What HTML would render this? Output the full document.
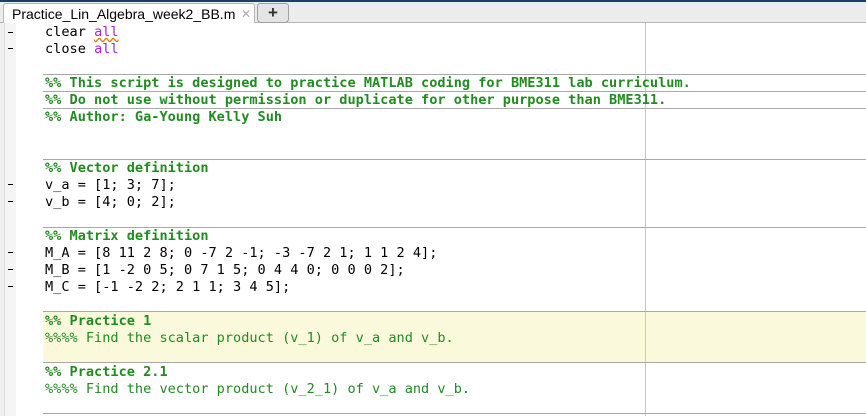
<!DOCTYPE html>
<html><head><style>
body{margin:0;width:866px;height:416px;overflow:hidden;background:#fff;font-family:"DejaVu Sans Mono",monospace;position:relative}
#top{position:absolute;left:0;top:0;width:866px;height:2px;background:#1f3d6b}
#bar{position:absolute;left:0;top:2px;width:866px;height:20px;background:#ececec;border-bottom:1px solid #b5b5b5}
#tab{position:absolute;left:3px;top:3px;width:252px;height:20px;background:#fff;border:1px solid #b5b5b5;border-bottom:none;border-radius:3px 3px 0 0;font:14px "Liberation Sans",sans-serif;color:#000;line-height:20px;padding-left:8px;box-sizing:border-box}
#tab span{position:absolute;left:237px;color:#aaa;font-size:12px}
#plus{position:absolute;left:257px;top:3px;width:30px;height:18px;background:#e4e4e4;border:1px solid #a0a0a0;border-radius:3px 3px 4px 4px;text-align:center;font:bold 17px "Liberation Sans",sans-serif;line-height:18px;color:#333}
#gut{position:absolute;left:0;top:23px;width:4px;height:393px;background:#efefef;border-right:1px solid #ddd}
#gut2{position:absolute;left:5px;top:23px;width:11px;height:393px;background:#f5f5f5}
#vl{position:absolute;left:645px;top:23px;width:1px;height:393px;background:#c8c8c8}
.l{position:absolute;left:45px;font-size:13.58px;line-height:17px;height:17px;white-space:pre;color:#000}
.c{color:#228b22}.b{font-weight:bold}.p{color:#a020f0}
.sep{position:absolute;left:43px;width:823px;height:1px;background:#a8a8a8}
.d{position:absolute;left:8px;width:5px;height:1px;background:#000}
#hl{position:absolute;left:43px;top:312px;width:823px;height:50px;background:#fbf9dc}
</style></head><body>
<div id="top"></div><div id="bar"></div>
<div id="tab">Practice_Lin_Algebra_week2_BB.m<span>✕</span></div>
<div id="plus">+</div>
<div id="gut"></div><div id="gut2"></div>
<div id="hl"></div>
<div id="vl"></div>
<div class="sep" style="top:74px"></div>
<div class="sep" style="top:91px"></div>
<div class="sep" style="top:108px"></div>
<div class="sep" style="top:159px"></div>
<div class="sep" style="top:227px"></div>
<div class="sep" style="top:311px"></div>
<div class="sep" style="top:362px"></div>
<div class="sep" style="top:413px"></div>
<div class="d" style="top:32px"></div><div class="d" style="top:48px"></div>
<div class="d" style="top:184px"></div><div class="d" style="top:201px"></div>
<div class="d" style="top:252px"></div><div class="d" style="top:269px"></div><div class="d" style="top:286px"></div>
<div class="l" style="top:24px">clear <span class="p" style="text-decoration:underline wavy #e08000">all</span></div>
<div class="l" style="top:41px">close <span class="p">all</span></div>
<div class="l c b" style="top:75px">%% This script is designed to practice MATLAB coding for BME311 lab curriculum.</div>
<div class="l c b" style="top:92px">%% Do not use without permission or duplicate for other purpose than BME311.</div>
<div class="l c b" style="top:109px">%% Author: Ga-Young Kelly Suh</div>
<div class="l c b" style="top:160px">%% Vector definition</div>
<div class="l" style="top:177px">v_a = [1; 3; 7];</div>
<div class="l" style="top:194px">v_b = [4; 0; 2];</div>
<div class="l c b" style="top:228px">%% Matrix definition</div>
<div class="l" style="top:245px">M_A = [8 11 2 8; 0 -7 2 -1; -3 -7 2 1; 1 1 2 4];</div>
<div class="l" style="top:262px">M_B = [1 -2 0 5; 0 7 1 5; 0 4 4 0; 0 0 0 2];</div>
<div class="l" style="top:279px">M_C = [-1 -2 2; 2 1 1; 3 4 5];</div>
<div class="l c" style="top:313px"><b>%% Practice 1</b></div>
<div class="l c" style="top:330px">%%%% Find the scalar product (v_1) of v_a and v_b.</div>
<div class="l c" style="top:364px"><b>%% Practice 2.1</b></div>
<div class="l c" style="top:381px">%%%% Find the vector product (v_2_1) of v_a and v_b.</div>
</body></html>
